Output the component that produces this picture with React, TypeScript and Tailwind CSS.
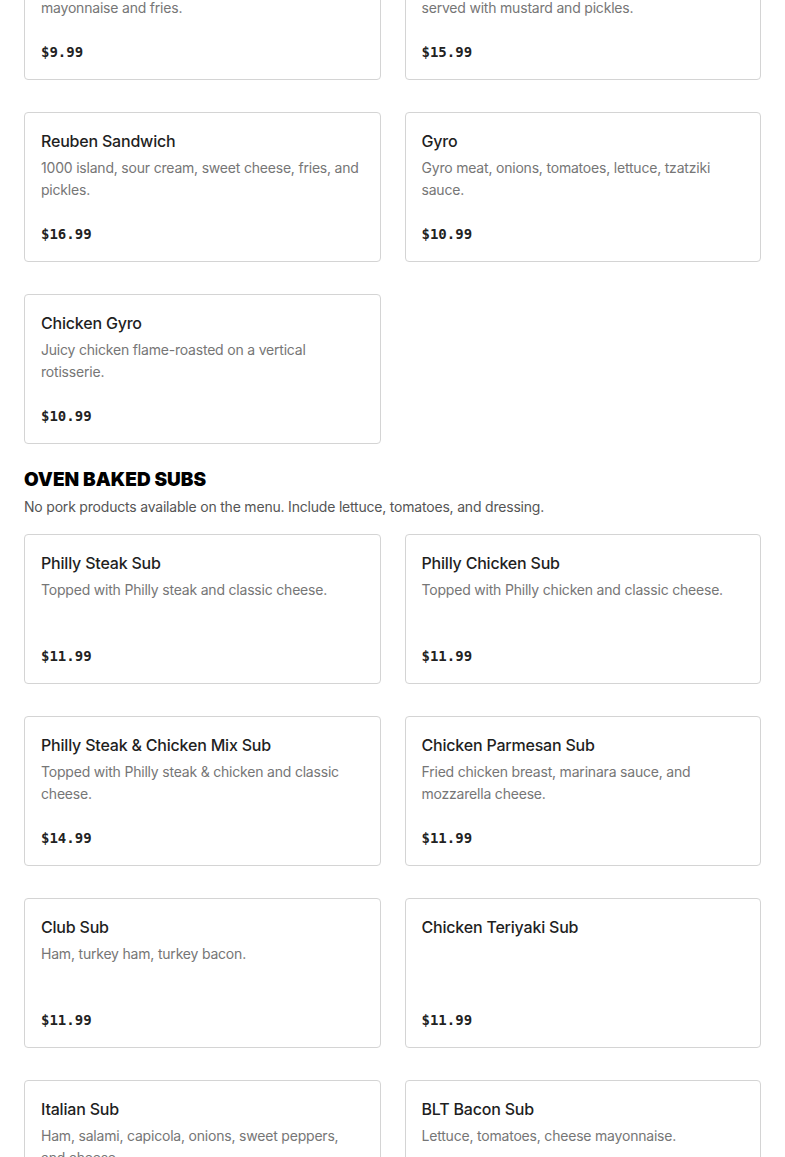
import React from "react";

type Item = { name: string; desc?: string; price: string };

const topRow: Item[] = [
  { name: "Chicken Sandwich", desc: "Grilled chicken, lettuce, tomatoes, garlic mayonnaise and fries.", price: "$9.99" },
  { name: "Beef Sausage Platter", desc: "Grilled beef sausages with onions and peppers, served with mustard and pickles.", price: "$15.99" },
];

const sandwiches: Item[] = [
  { name: "Reuben Sandwich", desc: "1000 island, sour cream, sweet cheese, fries, and pickles.", price: "$16.99" },
  { name: "Gyro", desc: "Gyro meat, onions, tomatoes, lettuce, tzatziki sauce.", price: "$10.99" },
  { name: "Chicken Gyro", desc: "Juicy chicken flame-roasted on a vertical rotisserie.", price: "$10.99" },
];

const subs: Item[] = [
  { name: "Philly Steak Sub", desc: "Topped with Philly steak and classic cheese.", price: "$11.99" },
  { name: "Philly Chicken Sub", desc: "Topped with Philly chicken and classic cheese.", price: "$11.99" },
  { name: "Philly Steak & Chicken Mix Sub", desc: "Topped with Philly steak & chicken and classic cheese.", price: "$14.99" },
  { name: "Chicken Parmesan Sub", desc: "Fried chicken breast, marinara sauce, and mozzarella cheese.", price: "$11.99" },
  { name: "Club Sub", desc: "Ham, turkey ham, turkey bacon.", price: "$11.99" },
  { name: "Chicken Teriyaki Sub", price: "$11.99" },
  { name: "Italian Sub", desc: "Ham, salami, capicola, onions, sweet peppers, and cheese.", price: "$11.99" },
  { name: "BLT Bacon Sub", desc: "Lettuce, tomatoes, cheese mayonnaise.", price: "$11.99" },
];

function Card({ item }: { item: Item }) {
  return (
    <div className="flex h-[150px] flex-col rounded border border-[#d4d4d4] bg-white px-4 pt-4 pb-[15px]">
      <div className="text-[16px] font-medium leading-6 tracking-[-0.2px] text-[#1f1f1f]">{item.name}</div>
      {item.desc && (
        <div className="mt-[4px] text-[14px] leading-[22px] tracking-[-0.2px] text-[#767676]">{item.desc}</div>
      )}
      <div
        className="mt-auto text-[14px] font-bold leading-6 text-[#222]"
        style={{ fontFamily: '"DejaVu Sans Mono", "Liberation Mono", monospace' }}
      >
        {item.price}
      </div>
    </div>
  );
}

function Grid({ items }: { items: Item[] }) {
  return (
    <div className="grid grid-cols-2 gap-x-6 gap-y-8">
      {items.map((it) => (
        <Card key={it.name} item={it} />
      ))}
    </div>
  );
}

export default function App() {
  return (
    <div
      className="h-[1157px] overflow-hidden bg-white px-6"
      style={{ fontFamily: 'Inter, "Noto Sans", "Liberation Sans", sans-serif' }}
    >
      <div className="-mt-[70px] flex flex-col gap-8">
        <Grid items={topRow} />
        <Grid items={sandwiches} />
      </div>
      <div className="mt-[25px]">
        <h2 className="text-[19px] font-black leading-[22px] text-black">OVEN BAKED SUBS</h2>
        <p className="mt-[5px] text-[14px] leading-[22px] tracking-[-0.2px] text-[#555]">
          No pork products available on the menu. Include lettuce, tomatoes, and dressing.
        </p>
      </div>
      <div className="mt-4">
        <Grid items={subs} />
      </div>
    </div>
  );
}
